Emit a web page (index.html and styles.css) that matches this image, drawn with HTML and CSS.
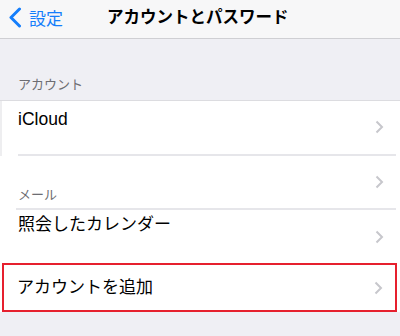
FILE: index.html
```html
<!DOCTYPE html>
<html lang="ja">
<head>
    <meta charset="UTF-8">
    <meta name="viewport" content="width=device-width, initial-scale=1.0">
    <title>アカウントとパスワード</title>
    <link rel="stylesheet" href="styles.css">
</head>
<body>
    <div class="screen">
        <div class="navbar">
            <a href="#" class="back">
                <svg class="back-icon" width="14" height="21" viewBox="0 0 14 21">
                    <path d="M11.5 2 L3 10.5 L11.5 19" fill="none" stroke="#157efb" stroke-width="3" stroke-linecap="round" stroke-linejoin="round"/>
                </svg>
                <span>設定</span>
            </a>
            <div class="title">アカウントとパスワード</div>
        </div>

        <div class="section-head">アカウント</div>

        <div class="group">
            <div class="row row-icloud">
                <span class="label">iCloud</span>
                <svg class="chevron" width="9" height="14" viewBox="0 0 9 14"><path d="M1.5 1.5 L7 7 L1.5 12.5" fill="none" stroke="#c7c7cc" stroke-width="2"/></svg>
            </div>
            <div class="row row-mail">
                <span class="sub-head">メール</span>
                <svg class="chevron" width="9" height="14" viewBox="0 0 9 14"><path d="M1.5 1.5 L7 7 L1.5 12.5" fill="none" stroke="#c7c7cc" stroke-width="2"/></svg>
            </div>
            <div class="row row-calendar">
                <span class="label">照会したカレンダー</span>
                <svg class="chevron" width="9" height="14" viewBox="0 0 9 14"><path d="M1.5 1.5 L7 7 L1.5 12.5" fill="none" stroke="#c7c7cc" stroke-width="2"/></svg>
            </div>
            <div class="row row-add">
                <span class="label">アカウントを追加</span>
                <svg class="chevron" width="9" height="14" viewBox="0 0 9 14"><path d="M1.5 1.5 L7 7 L1.5 12.5" fill="none" stroke="#c7c7cc" stroke-width="2"/></svg>
            </div>
        </div>

        <div class="footer-gap"></div>
    </div>
</body>
</html>
```

FILE: styles.css
```css
body {
    margin: 0;
    padding: 0;
    background: #efeff4;
    font-family: "Liberation Sans", "Noto Sans CJK JP", sans-serif;
    color: #000000;
}
.screen {
    width: 400px;
    height: 336px;
    overflow: hidden;
    background: #efeff4;
}
.navbar {
    height: 38px;
    display: flex;
    align-items: center;
    background: #f7f7f8;
    border-bottom: 1px solid #cfcfd3;
}
.back {
    display: flex;
    align-items: center;
    gap: 7px;
    padding-left: 8px;
    width: 99px;
    color: #157efb;
    text-decoration: none;
    font-size: 17px;
    margin-top: -3px;
}
.back-icon {
    display: block;
}
.title {
    font-size: 16.5px;
    font-weight: bold;
    margin-top: -6px;
}
.section-head {
    height: 62px;
    box-sizing: border-box;
    padding: 38px 0 0 18px;
    font-size: 13px;
    line-height: 16px;
    color: #6d6d72;
    border-bottom: 1px solid #dcdce0;
}
.group {
    background: #ffffff;
}
.row {
    display: flex;
    align-items: flex-start;
    justify-content: space-between;
    padding: 0 16px 0 18px;
    box-sizing: border-box;
    position: relative;
}
.label {
    font-size: 17px;
    line-height: 20px;
}
.sub-head {
    font-size: 13px;
    line-height: 16px;
    color: #6d6d72;
    margin-top: 31px;
}
.chevron {
    display: block;
}
.row-icloud {
    height: 55px;
    border-left: 2px solid #eeeef0;
    padding-left: 16px;
}
.row-icloud .label {
    font-size: 17.5px;
    margin-top: 8px;
}
.row-icloud .chevron {
    margin-top: 19px;
}
.row-icloud::after,
.row-mail::after {
    content: "";
    position: absolute;
    left: 16px;
    right: 4px;
    bottom: 0;
    height: 2px;
    background: #e6e6ea;
}
.row-mail {
    height: 54px;
}
.row-mail .chevron {
    margin-top: 19px;
}
.row-calendar {
    height: 53px;
}
.row-calendar .label {
    margin-top: 5px;
}
.row-calendar .chevron {
    margin-top: 20px;
}
.row-add {
    height: 49px;
    margin: 0 3px 0 2px;
    border: 2px solid #e6202e;
    padding-left: 13px;
    padding-right: 12px;
    align-items: center;
}
.footer-gap {
    height: 24px;
}
```
